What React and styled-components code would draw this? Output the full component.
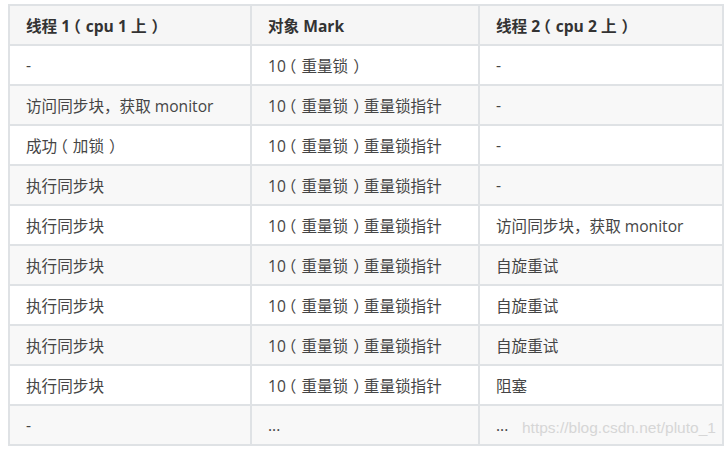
import React from 'react';
import styled, { createGlobalStyle } from 'styled-components';

const GlobalStyle = createGlobalStyle`
  html, body {
    margin: 0;
    background: #ffffff;
  }
`;

const Page = styled.div`
  position: relative;
  padding: 4px 0 0 8px;
  font-family: 'Open Sans', 'Noto Sans CJK SC', sans-serif;
`;

const Table = styled.table`
  border-collapse: collapse;
  table-layout: fixed;
  width: 714px;
  border: 2px solid #dfe2e5;
`;

const Row = styled.tr`
  height: 40px;
  background: ${props => (props.shaded ? '#f8f8f8' : '#ffffff')};
`;

const Head = styled.th`
  text-align: left;
  padding: 0 16px;
  font-size: 15.6px;
  font-weight: 700;
  color: #333333;
  border: 2px solid #dfe2e5;
  background: #f6f6f6;
  white-space: nowrap;
`;

const Cell = styled.td`
  padding: 0 16px;
  font-size: 15.6px;
  color: #454545;
  border: 2px solid #dfe2e5;
  white-space: nowrap;
`;

// half-width bracket glyph, padded back to a full slot so it sits centred
const Paren = styled.span`
  font-feature-settings: 'halt';
  margin: ${props => (props.open ? '0 0.32em 0 0.18em' : '0 0.18em 0 0.32em')};
`;

const Watermark = styled.span`
  position: absolute;
  left: 522px;
  top: 419px;
  font-family: 'Liberation Sans', Arial, sans-serif;
  font-size: 15.5px;
  color: #d6d6d6;
`;

const withParens = text =>
  text.split(/([（）])/).map((part, i) =>
    part === '（' || part === '）' ? (
      <Paren key={i} open={part === '（'}>
        {part}
      </Paren>
    ) : (
      part
    )
  );

const rows = [
  ['-', '10（重量锁）', '-'],
  ['访问同步块，获取 monitor', '10（重量锁）重量锁指针', '-'],
  ['成功（加锁）', '10（重量锁）重量锁指针', '-'],
  ['执行同步块', '10（重量锁）重量锁指针', '-'],
  ['执行同步块', '10（重量锁）重量锁指针', '访问同步块，获取 monitor'],
  ['执行同步块', '10（重量锁）重量锁指针', '自旋重试'],
  ['执行同步块', '10（重量锁）重量锁指针', '自旋重试'],
  ['执行同步块', '10（重量锁）重量锁指针', '自旋重试'],
  ['执行同步块', '10（重量锁）重量锁指针', '阻塞'],
  ['-', '...', '...'],
];

export default function App() {
  return (
    <Page>
      <GlobalStyle />
      <Table>
        <colgroup>
          <col style={{ width: 242 }} />
          <col style={{ width: 228 }} />
          <col style={{ width: 244 }} />
        </colgroup>
        <thead>
          <Row shaded>
            <Head>{withParens('线程 1（cpu 1 上）')}</Head>
            <Head>对象 Mark</Head>
            <Head>{withParens('线程 2（cpu 2 上）')}</Head>
          </Row>
        </thead>
        <tbody>
          {rows.map((r, i) => (
            <Row key={i} shaded={i % 2 === 1}>
              {r.map((c, j) => (
                <Cell key={j}>{withParens(c)}</Cell>
              ))}
            </Row>
          ))}
        </tbody>
      </Table>
      <Watermark>https://blog.csdn.net/pluto_1</Watermark>
    </Page>
  );
}
